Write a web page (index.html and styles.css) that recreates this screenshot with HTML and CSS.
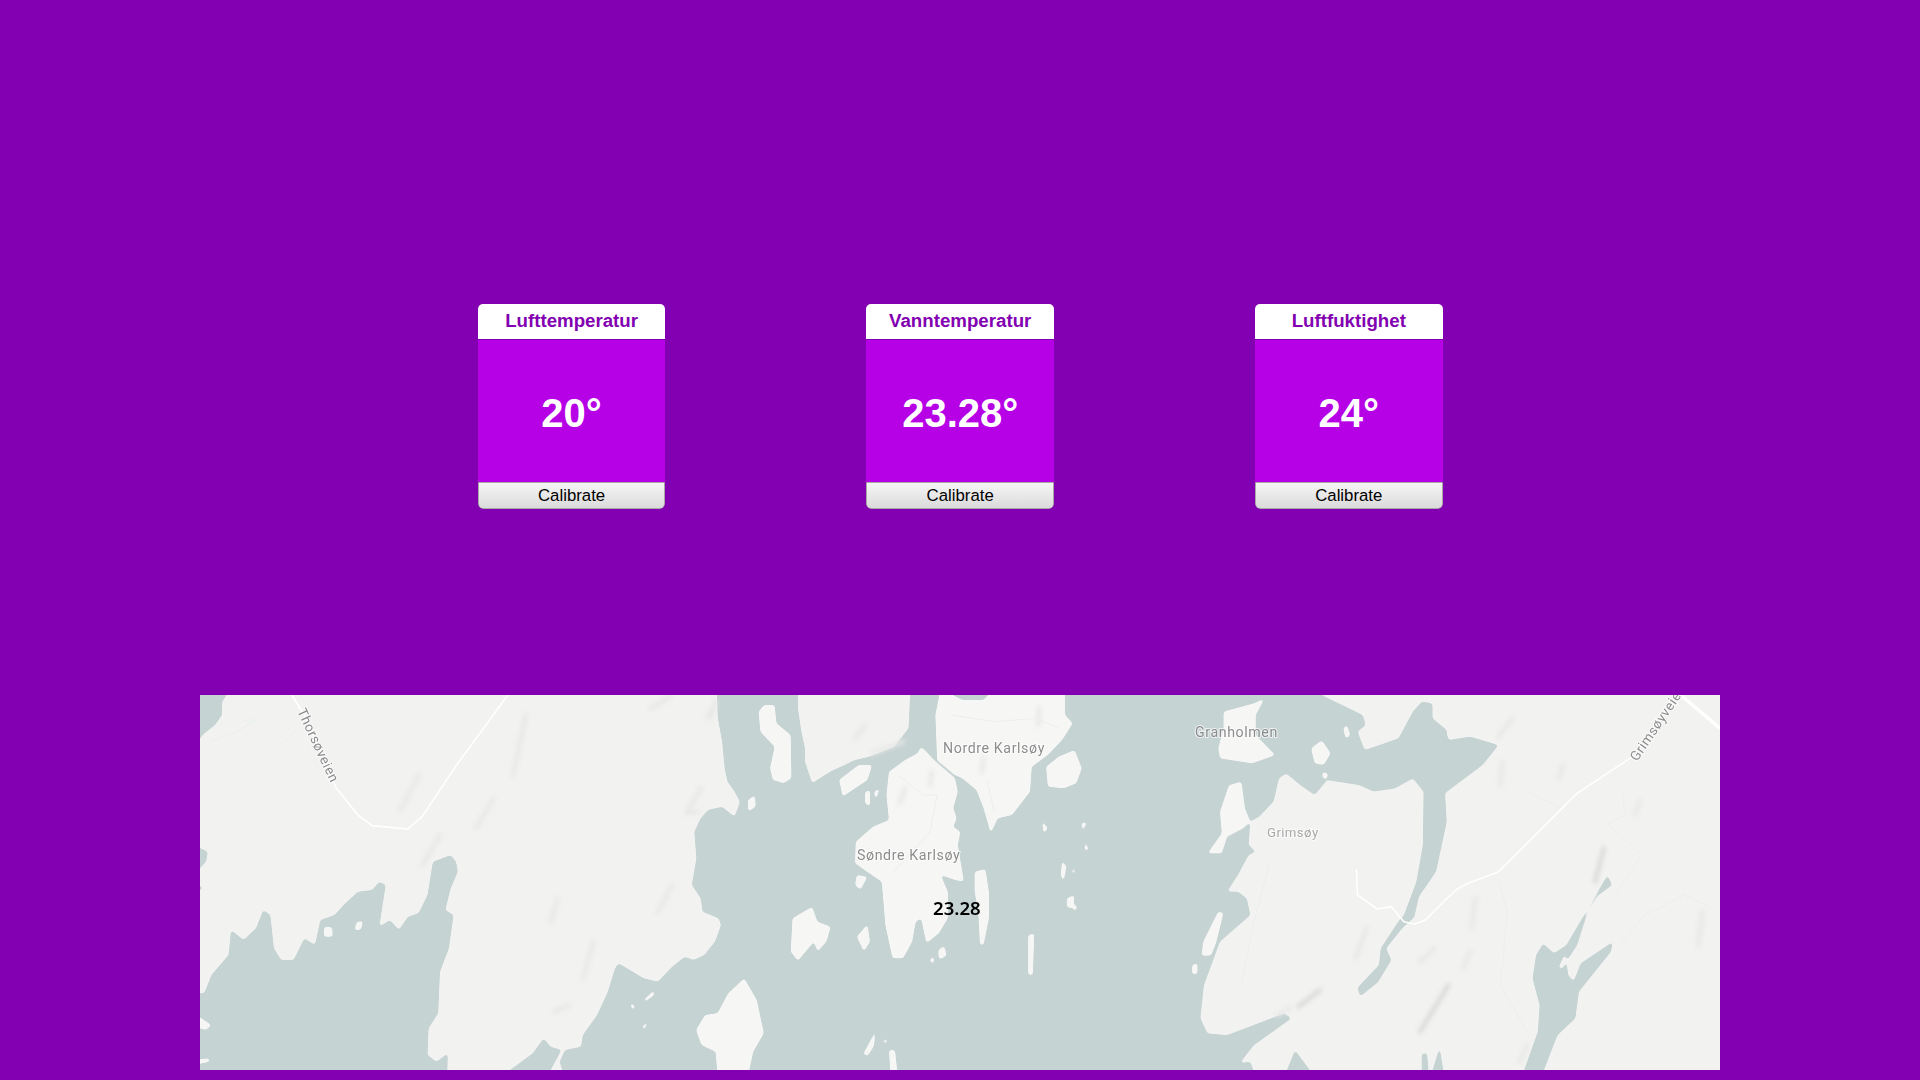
FILE: index.html
```html
<!DOCTYPE html>
<html lang="no">
<head>
    <meta charset="UTF-8">
    <meta name="viewport" content="width=device-width, initial-scale=1.0">
    <title>Temperatur</title>
    <link rel="stylesheet" href="styles.css">
</head>
<body>

    <section class="cards">
        <div class="card">
            <h2 class="card-title">Lufttemperatur</h2>
            <div class="card-value">20°</div>
            <button type="button" class="card-button">Calibrate</button>
        </div>
        <div class="card">
            <h2 class="card-title">Vanntemperatur</h2>
            <div class="card-value">23.28°</div>
            <button type="button" class="card-button">Calibrate</button>
        </div>
        <div class="card">
            <h2 class="card-title">Luftfuktighet</h2>
            <div class="card-value">24°</div>
            <button type="button" class="card-button">Calibrate</button>
        </div>
    </section>

    <section class="map">
        <svg class="map-svg" viewBox="200 695 1520 375" width="1520" height="375">
            <defs>
                <filter id="round-coast" filterUnits="userSpaceOnUse" x="180" y="675" width="1560" height="415" color-interpolation-filters="sRGB">
                    <feGaussianBlur stdDeviation="1.7"/>
                    <feComponentTransfer>
                        <feFuncA type="linear" slope="5" intercept="-2"/>
                    </feComponentTransfer>
                </filter>
            </defs>
            <rect class="water" x="200" y="695" width="1520" height="375"/>

            <g filter="url(#round-coast)">
                <!-- west part -->
                <g transform="translate(190 685) scale(0.35714 0.33333)">
                    <polygon class="land" points="115,10 1475,10 1475,30 1478,100 1490,170 1497,250 1505,290 1525,320 1540,350 1525,395 1490,365 1450,375 1430,400 1412,440 1418,520 1405,600 1430,640 1435,680 1480,700 1487,720 1470,770 1440,810 1410,825 1385,815 1350,845 1310,890 1270,880 1240,860 1200,835 1190,850 1170,920 1140,990 1100,1050 1095,1085 1050,1095 1035,1130 1048,1175 1000,1175 1040,1095 1010,1085 990,1060 960,1105 870,1175 720,1175 722,1105 690,1130 665,1110 668,1030 695,985 700,860 725,790 738,690 715,675 730,610 750,560 745,530 730,510 680,530 665,630 640,685 610,695 585,735 560,705 530,725 548,600 530,590 510,615 470,620 430,660 405,690 365,705 350,780 320,760 290,825 255,825 235,790 225,690 205,675 185,730 150,765 115,735 108,810 60,870 40,925 10,925 10,625 38,610 10,590 10,570 45,530 50,500 10,480 10,190 35,150 70,120 90,90 90,50"/>
                    <polygon class="isle" points="10,985 60,1020 45,1035 10,1025"/>
                    <polygon class="isle" points="10,1125 55,1120 55,1130 10,1140"/>
                    <polygon class="isle" points="375,725 398,727 400,755 375,755"/>
                    <polygon class="isle" points="467,710 485,708 478,735 460,735"/>
                    <polygon class="isle" points="1270,945 1300,915 1300,930 1275,950"/>
                    <polygon class="isle" points="1232,955 1245,960 1245,975 1236,970"/>
                    <polygon class="isle" points="1265,1030 1280,1005 1278,1025 1268,1035"/>
                </g>
                <!-- Karlsoy islands -->
                <g transform="translate(680 685) scale(0.35714 0.33333)">
                    <polygon class="land" points="330,10 645,10 640,130 600,185 530,215 490,225 420,260 370,295 350,230 350,190 340,140 330,70"/>
                    <polygon class="isle" points="220,80 235,60 265,60 270,115 310,150 312,280 290,295 260,285 252,250 265,185 225,140"/>
                    <polygon class="isle" points="190,345 210,330 212,365 190,380"/>
                    <polygon class="isle" points="445,285 500,240 538,240 525,285 455,335 450,305"/>
                    <polygon class="isle" points="518,320 532,315 532,365 518,355"/>
                    <polygon class="isle" points="543,320 560,308 548,347"/>
                    <polygon class="isle" points="675,185 690,200 720,235 770,280 778,320 765,370 775,400 765,425 785,440 778,480 795,590 770,585 730,570 750,620 750,700 725,745 690,775 675,700 660,710 650,770 625,820 595,820 575,720 565,590 530,565 490,535 492,470 540,425 585,405 578,330 585,260 630,225 665,205"/>
                    <polygon class="isle" points="730,10 790,45 850,45 880,10 1078,10 1078,90 1100,115 1070,165 1030,210 985,245 980,320 930,390 890,400 870,445 850,370 830,315 790,280 770,270 720,225 715,90"/>
                    <polygon class="isle" points="1025,245 1060,215 1105,195 1125,250 1110,295 1075,310 1030,305"/>
                    <polygon class="isle" points="495,570 525,575 505,615 490,600"/>
                    <polygon class="isle" points="315,700 370,665 385,710 422,725 410,770 385,800 375,770 330,828 310,800"/>
                    <polygon class="isle" points="495,755 525,718 532,770 515,800"/>
                    <polygon class="isle" points="723,795 740,782 747,812 725,824"/>
                    <polygon class="isle" points="698,825 712,812 710,840"/>
                    <polygon class="isle" points="825,560 855,552 865,620 865,700 850,780 840,780 835,680 825,620"/>
                    <polygon class="isle" points="975,750 992,745 988,870 975,870"/>
                    <polygon class="isle" points="1013,405 1030,430 1018,447"/>
                    <polygon class="isle" points="1098,345 1110,330 1102,355"/>
                    <polygon class="isle" points="1123,415 1140,410 1128,440"/>
                    <polygon class="isle" points="1133,465 1145,495 1133,497"/>
                    <polygon class="isle" points="1070,525 1082,545 1074,592 1066,570"/>
                    <polygon class="isle" points="1096,552 1108,553 1102,572"/>
                    <polygon class="isle" points="1083,640 1104,630 1102,670 1083,667"/>
                    <polygon class="isle" points="1103,660 1114,663 1102,687"/>
                    <polygon class="isle" points="105,1175 100,1100 60,1080 45,1035 70,990 105,985 135,925 180,880 215,945 235,1045 205,1100 190,1175"/>
                    <polygon class="isle" points="513,1107 550,1033 542,1085 525,1114"/>
                    <polygon class="isle" points="568,1065 580,1060 577,1082"/>
                    <polygon class="isle" points="585,1095 602,1095 610,1175 590,1175"/>
                </g>
                <!-- Grimsoy and east -->
                <g transform="translate(1170 685) scale(0.35714 0.33333)">
                    <path class="land" fill-rule="evenodd" d="M425,10 L1560,10 L1560,1175 L240,1175 L225,1130 L195,1135 L235,1080 L340,1000 L320,985 L160,1050 L105,1045 L85,1000 L95,900 L140,770 L225,690 L215,640 L190,620 L160,620 L190,570 L220,510 L240,500 L220,480 L225,410 L250,395 L290,350 L305,280 L325,265 L365,300 L405,330 L440,285 L530,300 L570,320 L630,310 L680,280 L710,320 L708,480 L690,590 L655,690 L640,708 L590,790 L585,840 L525,908 L532,935 L582,892 L620,825 L605,790 L652,728 L684,697 L697,635 L745,560 L775,410 L770,325 L800,300 L875,240 L920,180 L840,155 L780,165 L775,135 L735,100 L735,55 L705,50 L680,80 L640,160 L545,195 L525,140 L548,120 L540,90 L425,30 Z M1225,570 L1238,600 L1200,630 L1170,680 L1140,780 L1110,830 L1115,870 L1130,890 L1150,835 L1240,770 L1235,800 L1145,920 L1135,1000 L1085,1050 L1040,1175 L985,1175 L1030,1040 L1035,960 L1015,880 L1025,810 L1045,775 L1075,805 L1110,780 L1165,680 Z M705,1175 L705,1105 L720,1105 L725,1175 Z M730,1175 L755,1085 L768,1175 Z M320,1175 L350,1095 L405,1175 Z"/>
                    <polygon class="land" points="1088,847 1105,808 1112,825 1098,852"/>
                    <polygon class="isle" points="150,80 235,55 265,40 240,90 240,150 295,210 230,235 140,220 135,190 150,130"/>
                    <polygon class="isle" points="395,190 425,165 450,205 430,240 405,235"/>
                    <polygon class="isle" points="428,258 444,268 437,284 426,277"/>
                    <polygon class="isle" points="485,130 495,118 505,150 492,162"/>
                    <polygon class="isle" points="105,505 145,445 140,380 165,300 200,290 210,370 225,410 205,430 160,455 145,505 115,505"/>
                    <polygon class="isle" points="93,770 135,680 150,683 130,770 115,812 88,812"/>
                    <polygon class="isle" points="63,840 77,833 77,867 63,867"/>
                </g>
            </g>

            <g class="shade">
                <g transform="translate(190 685) scale(0.35714 0.33333)">
                    <polyline points="1290,70 1345,35"/>
                    <polyline points="1470,60 1450,95"/>
                    <polyline points="850,340 800,430"/>
                    <polyline points="700,450 650,540"/>
                    <polyline points="640,270 590,375"/>
                    <polyline points="1130,770 1100,880"/>
                    <polyline points="1060,960 1020,980"/>
                    <polyline points="1030,640 1010,710"/>
                    <polyline points="1350,600 1310,680"/>
                    <polyline points="1420,380 1390,385"/>
                    <polyline points="940,90 905,270"/>
                </g>
                <g transform="translate(680 685) scale(0.35714 0.33333)">
                    <polyline points="625,170 540,205"/>
                    <polyline points="520,120 490,160"/>
                    <polyline points="630,310 615,355"/>
                    <polyline points="705,260 700,300"/>
                    <polyline points="1005,70 1005,120"/>
                    <polyline points="850,220 845,260"/>
                    <polyline points="100,50 85,100"/>
                    <polyline points="60,310 20,380"/>
                </g>
                <g transform="translate(1170 685) scale(0.35714 0.33333)">
                    <polyline class="shade-dark" points="360,965 420,915"/>
                    <polyline points="300,990 335,970"/>
                    <polyline class="shade-dark" points="1215,490 1190,590"/>
                    <polyline points="855,640 845,730"/>
                    <polyline class="shade-dark" points="780,900 700,1040"/>
                    <polyline points="550,730 520,820"/>
                    <polyline points="740,790 700,830"/>
                    <polyline points="840,800 820,850"/>
                    <polyline points="960,100 920,155"/>
                    <polyline points="1100,240 1090,280"/>
                    <polyline points="1490,680 1480,780"/>
                    <polyline points="1315,350 1300,390"/>
                    <polyline points="930,230 925,300"/>
                    <polyline points="1000,1080 980,1130"/>
                </g>
            </g>

            <g class="stream">
                <g transform="translate(190 685) scale(0.35714 0.33333)">
                    <polyline points="60,170 130,140 185,105 150,105"/>
                    <polyline points="250,190 300,130"/>
                </g>
                <g transform="translate(680 685) scale(0.35714 0.33333)">
                    <polyline points="610,270 680,330 720,330 700,440 600,560"/>
                    <polyline points="760,90 880,110 1000,100 1060,130"/>
                    <polyline points="860,290 880,380"/>
                </g>
                <g transform="translate(1170 685) scale(0.35714 0.33333)">
                    <polyline points="1265,320 1275,390 1225,415 1320,510 1240,640"/>
                    <polyline points="1000,320 1100,370 1140,330"/>
                    <polyline points="1260,780 1330,690 1440,630 1520,670"/>
                    <polyline points="920,590 945,680 925,900 1000,1040"/>
                    <polyline points="280,530 230,730 200,900"/>
                </g>
            </g>

            <g class="roads">
                <g transform="translate(190 685) scale(0.35714 0.33333)">
                    <polyline class="road" points="285,30 320,90 410,310 470,390 510,422 610,432 650,395 740,250 890,30"/>
                </g>
                <g transform="translate(1170 685) scale(0.35714 0.33333)">
                    <polyline class="road" points="522,552 525,630 580,672 620,665 655,710 685,718 715,705 800,615 830,597 920,560 1140,325 1295,215"/>
                    <polyline class="road road-main" points="1430,30 1540,130"/>
                </g>
            </g>

            <text class="map-label map-label-small" transform="translate(297 711) rotate(65)">Thorsøveien</text>
            <text class="map-label" x="943" y="753">Nordre Karlsøy</text>
            <text class="map-label" x="857" y="860">Søndre Karlsøy</text>
            <text class="map-label" x="1195" y="737">Granholmen</text>
            <text class="map-label map-label-light" x="1267" y="837">Grimsøy</text>
            <text class="map-label map-label-small" transform="translate(1637 762) rotate(-56)">Grimsøyveien</text>
        </svg>
        <span class="map-marker">23.28</span>
    </section>

</body>
</html>
```

FILE: styles.css
```css
html, body {
    margin: 0;
    height: 100%;
}
body {
    background-color: #8200b1;
    font-family: "Liberation Sans", Arial, sans-serif;
    display: flex;
    flex-direction: column;
    align-items: center;
    overflow: hidden;
}
.cards {
    display: flex;
    gap: 201px;
    margin-top: 304px;
    margin-left: 0.4px;
}
.card {
    width: 187.6px;
    height: 205px;
    display: flex;
    flex-direction: column;
    border-radius: 5px;
    overflow: hidden;
}
.card-title {
    margin: 0;
    height: 36px;
    line-height: 34px;
    font-size: 18.7px;
    font-weight: bold;
    text-align: center;
    color: #8200b1;
    background-color: #fff;
    border-bottom: 1px solid #8200b1;
    box-sizing: border-box;
}
.card-value {
    flex: 1;
    display: flex;
    align-items: center;
    justify-content: center;
    padding-top: 4px;
    box-sizing: border-box;
    font-size: 40px;
    font-weight: bold;
    color: #fff;
    background-color: #b600e6;
}
.card-button {
    height: 27px;
    padding: 0;
    font-family: "Liberation Sans", Arial, sans-serif;
    font-size: 16.8px;
    color: #000;
    background: linear-gradient(#f5f5f5, #dbdbdb);
    border: 1px solid #a8a8a8;
    border-radius: 0 0 5px 5px;
    cursor: pointer;
}
.map {
    position: relative;
    width: 1520px;
    height: 375px;
    margin-top: 186px;
}
.map-svg {
    display: block;
}
.water {
    fill: #c6d3d3;
}
.land {
    fill: #f2f2f1;
}
.isle {
    fill: #f6f6f5;
}
.shade {
    filter: blur(2px);
}
.shade polyline {
    fill: none;
    stroke: #e7e7e6;
    stroke-width: 4px;
    stroke-linecap: round;
    vector-effect: non-scaling-stroke;
}
.shade polyline.shade-dark {
    stroke: #d8d8d7;
}
.stream polyline {
    fill: none;
    stroke: #e9efee;
    stroke-width: 1px;
    vector-effect: non-scaling-stroke;
}
.road {
    fill: none;
    stroke: #fff;
    stroke-width: 1.6px;
    stroke-linejoin: round;
    vector-effect: non-scaling-stroke;
}
.road-main {
    stroke-width: 3.5px;
}
.map-label {
    font-family: "Roboto", sans-serif;
    font-size: 14.2px;
    letter-spacing: 0.6px;
    fill: #8c8c8c;
    stroke: #fff;
    stroke-width: 2px;
    stroke-opacity: 0.7;
    paint-order: stroke;
}
.map-label-small {
    font-size: 13.6px;
    letter-spacing: 0.5px;
}
.map-label-light {
    font-size: 13.2px;
    letter-spacing: 0.4px;
    fill: #a8a8a8;
}
.map-marker {
    position: absolute;
    left: 733px;
    top: 200px;
    font-family: "Noto Sans", sans-serif;
    font-size: 18.6px;
    font-weight: 600;
    line-height: 26px;
    color: #000;
}
```
